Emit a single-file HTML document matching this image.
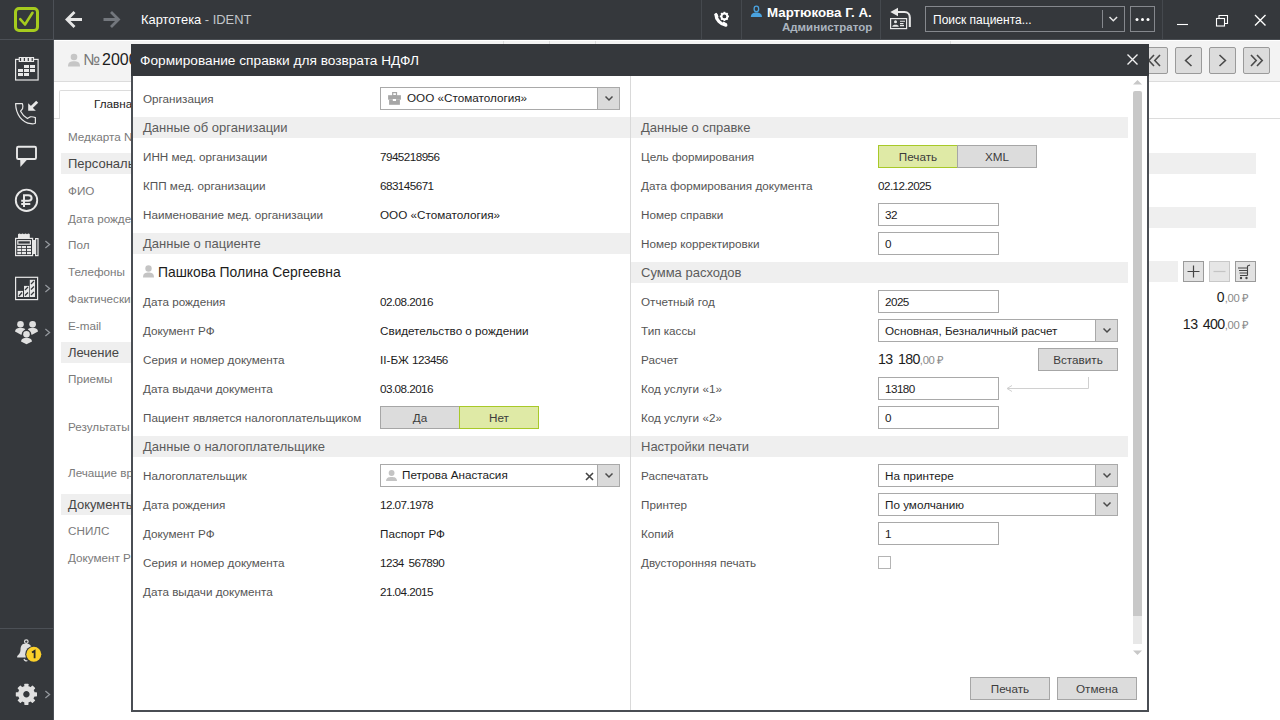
<!DOCTYPE html>
<html><head><meta charset="utf-8">
<style>
*{box-sizing:border-box;margin:0;padding:0}
html,body{width:1280px;height:720px;overflow:hidden;background:#35383c;font-family:"Liberation Sans",sans-serif}
.a{position:absolute}
.t{position:absolute;white-space:nowrap;font-size:11.7px;line-height:14px}
.lb{color:#555555}
.v{color:#1c1c1c}
.num{letter-spacing:-0.55px;word-spacing:2px}
.band{position:absolute;background:#efefef;height:21px}
.band span{position:absolute;left:10px;top:4px;font-size:13px;line-height:14px;color:#5c5c5c;white-space:nowrap}
.inp{position:absolute;border:1px solid #a9a9a9;background:#fff;height:23px}
.inp span{position:absolute;left:6px;top:4px;font-size:11.7px;line-height:14px;color:#1c1c1c;white-space:nowrap}
.dd{position:absolute;right:0;top:0;bottom:0;width:22px;background:#dadada;border-left:1px solid #a9a9a9}
.dd svg{position:absolute;left:6px;top:7px}
.btn{position:absolute;background:#dcdcdc;border:1px solid #a6a6a6;text-align:center;font-size:11.7px;line-height:21px;color:#3c3c3c;white-space:nowrap}
.tg-on{background:#dfeaa6;border:1px solid #a8c929}
.sbl{position:absolute;left:68px;font-size:11.7px;line-height:14px;color:#7a7a7a;white-space:nowrap}
.sep{position:absolute;top:0;width:1px;height:39px;background:#45494e}
</style></head><body>
<div class="a" style="left:54px;top:40px;width:1226px;height:680px;background:#fff"></div>
<div class="a" style="left:54px;top:41px;width:1226px;height:40px;background:#f3f3f3"></div>
<div class="a" style="left:54px;top:81px;width:1226px;height:1px;background:#dcdcdc"></div>
<div class="a" style="left:503px;top:41px;width:1px;height:40px;background:#dcdcdc"></div>
<div class="a" style="left:549px;top:41px;width:1px;height:40px;background:#dcdcdc"></div>
<div class="a" style="left:595px;top:41px;width:1px;height:40px;background:#dcdcdc"></div>
<div class="a" style="left:950px;top:41px;width:1px;height:40px;background:#dcdcdc"></div>
<svg class="a" style="left:68px;top:53px" width="12" height="14" viewBox="0 0 12 14"><circle cx="6" cy="4" r="3.3" fill="#c6c6c6"/><path d="M0 13.5 C0 9 2.5 8.3 6 8.3 S12 9 12 13.5Z" fill="#c6c6c6"/></svg>
<div class="t" style="left:83px;top:51px;font-size:16px;line-height:18px;color:#777">№</div>
<div class="t" style="left:102px;top:51px;font-size:16px;line-height:18px;color:#1c1c1c">2000</div>
<div class="a" style="left:1141px;top:47px;width:27px;height:27px;background:#dcdcdc;border:1px solid #9a9a9a;border-radius:2px"></div>
<div class="a" style="left:1175px;top:47px;width:27px;height:27px;background:#dcdcdc;border:1px solid #9a9a9a;border-radius:2px"></div>
<div class="a" style="left:1209px;top:47px;width:27px;height:27px;background:#dcdcdc;border:1px solid #9a9a9a;border-radius:2px"></div>
<div class="a" style="left:1243px;top:47px;width:27px;height:27px;background:#dcdcdc;border:1px solid #9a9a9a;border-radius:2px"></div>
<svg class="a" style="left:1141px;top:47px" width="136" height="27" viewBox="0 0 136 27">
 <path d="M13 8 L7.8 13.5 L13 19 M19 8 L13.8 13.5 L19 19" fill="none" stroke="#4a4a4a" stroke-width="1.6"/>
 <path d="M50.5 8 L44.6 13.5 L50.5 19" fill="none" stroke="#4a4a4a" stroke-width="1.6"/>
 <path d="M78.5 8 L84.4 13.5 L78.5 19" fill="none" stroke="#4a4a4a" stroke-width="1.6"/>
 <path d="M110 8 L115.2 13.5 L110 19 M116 8 L121.2 13.5 L116 19" fill="none" stroke="#4a4a4a" stroke-width="1.6"/>
</svg>
<div class="a" style="left:54px;top:118px;width:1226px;height:1px;background:#dcdcdc"></div>
<div class="a" style="left:59px;top:90px;width:120px;height:29px;background:#fff;border:1px solid #dcdcdc;border-bottom:none;border-radius:2px 2px 0 0"></div>
<div class="t" style="left:94px;top:97px;color:#1c1c1c">Главная</div>
<div class="sbl" style="top:130px">Медкарта N</div>
<div class="a" style="left:61px;top:153px;width:560px;height:21px;background:#efefef"></div>
<div class="t" style="left:68px;top:157px;font-size:13px;line-height:14px;color:#464646">Персональные данные</div>
<div class="a" style="left:61px;top:342px;width:560px;height:21px;background:#efefef"></div>
<div class="t" style="left:68px;top:346px;font-size:13px;line-height:14px;color:#464646">Лечение</div>
<div class="a" style="left:61px;top:494px;width:560px;height:21px;background:#efefef"></div>
<div class="t" style="left:68px;top:498px;font-size:13px;line-height:14px;color:#464646">Документы</div>
<div class="sbl" style="top:184px">ФИО</div>
<div class="sbl" style="top:212px">Дата рождения</div>
<div class="sbl" style="top:238px">Пол</div>
<div class="sbl" style="top:265px">Телефоны</div>
<div class="sbl" style="top:292px">Фактический адрес</div>
<div class="sbl" style="top:319px">E-mail</div>
<div class="sbl" style="top:372px">Приемы</div>
<div class="sbl" style="top:420px">Результаты исследований</div>
<div class="sbl" style="top:466px">Лечащие врачи</div>
<div class="sbl" style="top:524px">СНИЛС</div>
<div class="sbl" style="top:551px">Документ РФ</div>
<div class="a" style="left:700px;top:153px;width:556px;height:21px;background:#efefef"></div>
<div class="a" style="left:700px;top:207px;width:556px;height:21px;background:#efefef"></div>
<div class="a" style="left:700px;top:261px;width:478px;height:21px;background:#efefef"></div>
<div class="a" style="left:1183px;top:261px;width:21px;height:21px;background:#e2e2e2;border:1px solid #9a9a9a"></div>
<div class="a" style="left:1209px;top:261px;width:21px;height:21px;background:#e6e6e6;border:1px solid #c8c8c8"></div>
<div class="a" style="left:1235px;top:261px;width:21px;height:21px;background:#e2e2e2;border:1px solid #9a9a9a"></div>
<svg class="a" style="left:1183px;top:261px" width="73" height="21" viewBox="0 0 73 21">
 <path d="M10.5 4.5v12M4.5 10.5h12" stroke="#444" stroke-width="1.2"/>
 <path d="M30.5 10.5h12" stroke="#c4c4c4" stroke-width="1.2"/>
 <path d="M55 7h9.5M56 9.5h8.5M56.5 12h8M57 14.5h7.5M64.5 14.5 V5 L67 4" fill="none" stroke="#444" stroke-width="1.1"/>
 <circle cx="58" cy="17" r="1.2" fill="#444"/><circle cx="63.5" cy="17" r="1.2" fill="#444"/>
</svg>
<div class="t" style="left:1200px;top:290px;width:49px;text-align:right;font-size:14px;line-height:15px;color:#1c1c1c">0<span style="font-size:11.3px;color:#8a8a8a;letter-spacing:-0.3px">,00 ₽</span></div>
<div class="t" style="left:1150px;top:317px;width:99px;text-align:right;font-size:14.2px;line-height:15px;color:#1c1c1c;letter-spacing:-0.6px;word-spacing:2px">13 400<span style="font-size:11.3px;color:#8a8a8a;letter-spacing:-0.3px;word-spacing:0">,00 ₽</span></div>
<svg class="a" style="left:0;top:0" width="1280" height="720" viewBox="0 0 1280 720"><rect x="15.5" y="8.5" width="22" height="22" rx="3.5" fill="none" stroke="#a6cb1e" stroke-width="3"/><path d="M20.2 19.2 L25 24.5 L32.5 12.8" fill="none" stroke="#a6cb1e" stroke-width="2.6" stroke-linecap="round" stroke-linejoin="round"/><path d="M82 19.5 H67.5 M74.5 12 L67 19.5 L74.5 27" fill="none" stroke="#e6e6e6" stroke-width="2.8"/><path d="M103.5 19.5 H118 M111 12 L118.5 19.5 L111 27" fill="none" stroke="#73777d" stroke-width="2.8"/><path d="M716 14.8 C716 19.5 720.5 24.5 725.8 25.2" fill="none" stroke="#fff" stroke-width="3.3" stroke-linecap="round"/><path d="M714.2 14.2 L716.5 12.8 L718.6 16.5 L716.8 17.8Z M722.2 23.6 L723.6 21.6 L727.2 23.8 L725.8 26.3Z" fill="#fff"/><g transform="translate(724.4 16.4)"><circle r="2.9" fill="none" stroke="#fff" stroke-width="1.9"/><rect x="-0.9" y="-4.6" width="1.8" height="1.8" fill="#fff" transform="rotate(0)"/><rect x="-0.9" y="-4.6" width="1.8" height="1.8" fill="#fff" transform="rotate(45)"/><rect x="-0.9" y="-4.6" width="1.8" height="1.8" fill="#fff" transform="rotate(90)"/><rect x="-0.9" y="-4.6" width="1.8" height="1.8" fill="#fff" transform="rotate(135)"/><rect x="-0.9" y="-4.6" width="1.8" height="1.8" fill="#fff" transform="rotate(180)"/><rect x="-0.9" y="-4.6" width="1.8" height="1.8" fill="#fff" transform="rotate(225)"/><rect x="-0.9" y="-4.6" width="1.8" height="1.8" fill="#fff" transform="rotate(270)"/><rect x="-0.9" y="-4.6" width="1.8" height="1.8" fill="#fff" transform="rotate(315)"/></g><ellipse cx="756.4" cy="8.9" rx="2.3" ry="2.7" fill="none" stroke="#4aa3e0" stroke-width="1.3"/><path d="M750.8 17 C751 13.5 753.5 12.6 756.4 12.6 S761.8 13.5 762 17Z" fill="#4aa3e0"/><path d="M890.3 12 L898 7.8 V16.2Z" fill="#e8e8e8"/><path d="M897 12 H904.5 C908 12 909.8 14.5 909.8 17.5 V27" fill="none" stroke="#e8e8e8" stroke-width="2.1"/><rect x="890.6" y="18.6" width="16" height="10" fill="none" stroke="#e8e8e8" stroke-width="1.2"/><circle cx="895.5" cy="21.8" r="1.5" fill="#e8e8e8"/><path d="M892.2 26.7 C892.5 24.2 898.5 24.2 898.8 26.7Z" fill="#e8e8e8"/><path d="M900 21.3h5M900 23.6h3.5M900 25.6h4" stroke="#e8e8e8" stroke-width="1.1"/><rect x="925.5" y="6.5" width="199" height="25" fill="none" stroke="#85888d" stroke-width="1"/><path d="M1102.5 10 V28" stroke="#85888d" stroke-width="1"/><path d="M1109.5 17 L1113.3 20.8 L1117.1 17" fill="none" stroke="#e6e6e6" stroke-width="1.5"/><rect x="1130.5" y="6.5" width="24" height="25" fill="none" stroke="#85888d" stroke-width="1"/><circle cx="1137" cy="19.5" r="1.5" fill="#fff"/><circle cx="1142.5" cy="19.5" r="1.5" fill="#fff"/><circle cx="1148" cy="19.5" r="1.5" fill="#fff"/><path d="M1177 24.5 H1188" stroke="#fff" stroke-width="1.1"/><rect x="1216.5" y="18.5" width="8" height="7.5" fill="none" stroke="#fff" stroke-width="1.1"/><path d="M1219 18.5 V15.5 H1227.5 V23.5 H1224.5" fill="none" stroke="#fff" stroke-width="1.1"/><path d="M1255 15 L1265.5 25.5 M1265.5 15 L1255 25.5" stroke="#fff" stroke-width="1.4"/><rect x="15.6" y="59.4" width="22.5" height="20.6" fill="none" stroke="#e8e8e8" stroke-width="1.2"/><rect x="18.7" y="57" width="15.4" height="5" fill="#e8e8e8"/><rect x="19.9" y="58" width="1.2" height="3" fill="#35383c"/><rect x="23.799999999999997" y="58" width="1.2" height="3" fill="#35383c"/><rect x="27.7" y="58" width="1.2" height="3" fill="#35383c"/><rect x="31.6" y="58" width="1.2" height="3" fill="#35383c"/><rect x="24" y="65" width="5" height="3" fill="#e8e8e8"/><rect x="30" y="65" width="5" height="3" fill="#e8e8e8"/><rect x="18" y="69" width="5" height="3" fill="#e8e8e8"/><rect x="24" y="69" width="5" height="3" fill="#e8e8e8"/><rect x="30" y="69" width="5" height="3" fill="#e8e8e8"/><rect x="18" y="73" width="5" height="3" fill="#e8e8e8"/><rect x="24" y="73" width="5" height="3" fill="#e8e8e8"/><path d="M15.6 103.6 H22.4 C22.9 105 22.9 107.5 22.6 108.6 L20.6 111.2 C22 114 24.5 116.8 27.4 118.6 L30.4 116.8 C32 116.7 34 117 35.4 117.6 V123.2 C34 123.8 32.5 123.9 31 123.7 C22 122.5 15.8 114.5 15.6 103.6Z" fill="none" stroke="#e8e8e8" stroke-width="1.2" stroke-linejoin="round"/><path d="M28.2 103.2 V110.8 H35.8Z" fill="#e8e8e8"/><path d="M31 107.8 L37.2 101.8" stroke="#e8e8e8" stroke-width="2.8"/><rect x="17" y="146.8" width="19" height="12.2" rx="1.3" fill="none" stroke="#e8e8e8" stroke-width="1.9"/><path d="M20.2 159.5 H27.2 L20.4 167Z" fill="#e8e8e8"/><circle cx="26.5" cy="200.3" r="10.7" fill="none" stroke="#e8e8e8" stroke-width="1.9"/><path d="M24 207 V195.2 H28.3 C30.6 195.2 31.6 196.5 31.6 198 S30.6 200.8 28.3 200.8 H21.2 M21.2 203.9 H30.3" fill="none" stroke="#e8e8e8" stroke-width="2"/><path d="M18 238.5 V234.2 Q19.5 232.6 21 234.2 Q22.5 232.6 24 234.2 Q25.5 232.6 27 234.2 Q28.5 232.6 29.8 234.2 V238.5Z" fill="#e8e8e8"/><rect x="15.6" y="238.4" width="17" height="17.2" fill="none" stroke="#e8e8e8" stroke-width="1.2"/><rect x="17.8" y="240.7" width="12.6" height="3.5" fill="none" stroke="#e8e8e8" stroke-width="1.2"/><rect x="17.3" y="246" width="4" height="2.2" fill="#e8e8e8"/><rect x="22" y="246" width="4" height="2.2" fill="#e8e8e8"/><rect x="27" y="246" width="4" height="2.2" fill="#e8e8e8"/><rect x="17.3" y="249" width="4" height="2.2" fill="#e8e8e8"/><rect x="22" y="249" width="4" height="2.2" fill="#e8e8e8"/><rect x="27" y="249" width="4" height="2.2" fill="#e8e8e8"/><rect x="17.3" y="252" width="4" height="2.2" fill="#e8e8e8"/><rect x="22" y="252" width="4" height="2.2" fill="#e8e8e8"/><rect x="27" y="252" width="4" height="2.2" fill="#e8e8e8"/><rect x="33" y="240" width="2" height="14" fill="#e8e8e8"/><rect x="35.6" y="238.6" width="2.4" height="17" fill="none" stroke="#e8e8e8" stroke-width="1.2"/><rect x="15.6" y="277.3" width="22" height="22.3" fill="none" stroke="#e8e8e8" stroke-width="1.2"/><rect x="17.8" y="290.9" width="5.2" height="6.1" fill="#e8e8e8"/><rect x="24" y="285.9" width="5.1" height="11.1" fill="#e8e8e8"/><rect x="29.8" y="279.8" width="5.2" height="17.2" fill="#e8e8e8"/><path d="M19 296 L22 292.5 M25 290 L28 287 M25 295.5 L28 292.5 M31 284 L34 281 M31 289.5 L34 286.5 M31 295 L34 292" stroke="#35383c" stroke-width="1.3"/><circle cx="20.5" cy="324.2" r="3.3" fill="#e0e0e0"/><path d="M15 331.5 C15.5 328.5 18 327.8 20.5 327.8 S24.8 328.5 25.3 329.5 L21.5 335 Z" fill="#e0e0e0"/><circle cx="32.6" cy="324.2" r="3.3" fill="#e0e0e0"/><path d="M38 331.5 C37.5 328.5 35 327.8 32.6 327.8 S28.3 328.5 27.8 329.5 L31.5 335 Z" fill="#e0e0e0"/><circle cx="26.5" cy="334.3" r="4.8" fill="#35383c"/><circle cx="26.5" cy="334.3" r="3.3" fill="#e0e0e0"/><path d="M21 341.5 C21.5 338.5 24 337.8 26.5 337.8 S31.5 338.5 32 341.5 L26.5 344.2 Z" fill="#e0e0e0"/><path d="M45.4 241.1 L49.6 244.6 L45.4 248.1" fill="none" stroke="#94989d" stroke-width="1.25"/><path d="M45.4 285.1 L49.6 288.6 L45.4 292.1" fill="none" stroke="#94989d" stroke-width="1.25"/><path d="M45.4 329.1 L49.6 332.6 L45.4 336.1" fill="none" stroke="#94989d" stroke-width="1.25"/><path d="M45.4 691.0 L49.6 694.5 L45.4 698.0" fill="none" stroke="#94989d" stroke-width="1.25"/><path d="M0 628.5 H53" stroke="#4c5056" stroke-width="1"/><circle cx="26.3" cy="641.6" r="1.8" fill="none" stroke="#e0e0e0" stroke-width="1.2"/><path d="M26 643.5 C21 643.5 20.5 647 20.5 650 C20.5 653 18.5 655 17.2 656 V657.6 H33 V652 C32 648 31.5 643.5 26 643.5Z" fill="#e0e0e0"/><path d="M24 659 C24.5 660.5 26 661.3 27.5 660.5" stroke="#e0e0e0" stroke-width="1.3" fill="none"/><circle cx="33.8" cy="654.3" r="8.6" fill="#35383c"/><circle cx="33.8" cy="654.3" r="7.5" fill="#fbd02a"/><path d="M32 652.5 L34.6 650.9 V658.2" fill="none" stroke="#2a2a2a" stroke-width="1.8"/><g transform="translate(26.4 694.3)"><rect x="-2.1" y="-10.6" width="4.2" height="4" rx="0.6" fill="#e0e0e0" transform="rotate(0)"/><rect x="-2.1" y="-10.6" width="4.2" height="4" rx="0.6" fill="#e0e0e0" transform="rotate(45)"/><rect x="-2.1" y="-10.6" width="4.2" height="4" rx="0.6" fill="#e0e0e0" transform="rotate(90)"/><rect x="-2.1" y="-10.6" width="4.2" height="4" rx="0.6" fill="#e0e0e0" transform="rotate(135)"/><rect x="-2.1" y="-10.6" width="4.2" height="4" rx="0.6" fill="#e0e0e0" transform="rotate(180)"/><rect x="-2.1" y="-10.6" width="4.2" height="4" rx="0.6" fill="#e0e0e0" transform="rotate(225)"/><rect x="-2.1" y="-10.6" width="4.2" height="4" rx="0.6" fill="#e0e0e0" transform="rotate(270)"/><rect x="-2.1" y="-10.6" width="4.2" height="4" rx="0.6" fill="#e0e0e0" transform="rotate(315)"/><circle r="5.8" fill="none" stroke="#e0e0e0" stroke-width="5.2"/></g></svg>
<div class="a" style="left:0;top:39px;width:53px;height:1px;background:#4c5056"></div>
<div class="a" style="left:53px;top:0;width:1px;height:720px;background:#4c5056"></div>
<div class="a" style="left:54px;top:39px;width:1226px;height:1px;background:#4a4e53"></div>
<div class="sep" style="left:701px"></div><div class="sep" style="left:741px"></div><div class="sep" style="left:880px"></div><div class="sep" style="left:1162px"></div>
<div class="t" style="left:141px;top:13px;font-size:12.9px;line-height:14px;color:#fff">Картотека <span style="color:#c3c6ca">- IDENT</span></div>
<div class="t" style="left:767px;top:5px;font-size:13.3px;line-height:16px;color:#fff;font-weight:bold">Мартюкова Г. А.</div>
<div class="t" style="left:782px;top:20px;font-size:11.5px;line-height:14px;color:#aab4bf;font-weight:bold">Администратор</div>
<div class="t" style="left:933px;top:13px;font-size:12px;line-height:14px;color:#fff">Поиск пациента...</div>
<div class="a" style="left:131px;top:44px;width:1018px;height:668px;background:#fff;border:2px solid #4a4e54;border-top:none"></div>
<div class="a" style="left:131px;top:44px;width:1018px;height:32px;background:#35383c"></div>
<div class="t" style="left:140px;top:54px;font-size:13.7px;line-height:14px;color:#fff">Формирование справки для возврата НДФЛ</div>
<svg class="a" style="left:1126px;top:53px" width="13" height="13" viewBox="0 0 13 13"><path d="M1.5 1.5 L11.5 11.5 M11.5 1.5 L1.5 11.5" stroke="#f2f2f2" stroke-width="1.35"/></svg>
<div class="a" style="left:630px;top:76px;width:1px;height:634px;background:#d9d9d9"></div>
<div class="t lb" style="left:143px;top:92px">Организация</div>
<div class="inp" style="left:380px;top:87px;width:240px"><svg class="a" style="left:7px;top:4px" width="14" height="14" viewBox="0 0 14 14"><rect x="4.7" y="0.6" width="3.8" height="3" fill="none" stroke="#a6a6a6" stroke-width="1.2"/><rect x="0.1" y="3.2" width="12.8" height="4.5" fill="#a6a6a6"/><rect x="1.1" y="7.7" width="10.8" height="5.1" fill="#a6a6a6"/><rect x="4.8" y="7" width="3.2" height="2" fill="#fff"/></svg><span style="left:26px;top:3px">ООО «Стоматология»</span><div class="dd"><svg width="10" height="7" viewBox="0 0 10 7"><path d="M1.5 1.5 L5 5 L8.5 1.5" fill="none" stroke="#4a4a4a" stroke-width="1.5"/></svg></div></div>
<div class="band" style="left:133px;top:117px;width:497px"><span>Данные об организации</span></div>
<div class="t lb" style="left:143px;top:150px">ИНН мед. организации</div>
<div class="t v num" style="left:380px;top:150px">7945218956</div>
<div class="t lb" style="left:143px;top:179px">КПП мед. организации</div>
<div class="t v num" style="left:380px;top:179px">683145671</div>
<div class="t lb" style="left:143px;top:208px">Наименование мед. организации</div>
<div class="t v " style="left:380px;top:208px">ООО «Стоматология»</div>
<div class="band" style="left:133px;top:233px;width:497px"><span>Данные о пациенте</span></div>
<svg class="a" style="left:143px;top:265px" width="11" height="13" viewBox="0 0 11 13"><circle cx="5.5" cy="3.5" r="3.2" fill="#c4c4c4"/><path d="M0 12.5 C0 8.5 2.3 7.6 5.5 7.6 S11 8.5 11 12.5Z" fill="#c4c4c4"/></svg>
<div class="t v" style="left:158px;top:264px;font-size:13.9px;line-height:16px">Пашкова Полина Сергеевна</div>
<div class="t lb" style="left:143px;top:295px">Дата рождения</div>
<div class="t v num" style="left:380px;top:295px">02.08.2016</div>
<div class="t lb" style="left:143px;top:324px">Документ РФ</div>
<div class="t v " style="left:380px;top:324px">Свидетельство о рождении</div>
<div class="t lb" style="left:143px;top:353px">Серия и номер документа</div>
<div class="t v " style="left:380px;top:353px">II-БЖ <span class="num">123456</span></div>
<div class="t lb" style="left:143px;top:382px">Дата выдачи документа</div>
<div class="t v num" style="left:380px;top:382px">03.08.2016</div>
<div class="t lb" style="left:143px;top:411px">Пациент является налогоплательщиком</div>
<div class="btn" style="left:380px;top:406px;width:80px;height:23px">Да</div>
<div class="btn tg-on" style="left:459px;top:406px;width:80px;height:23px">Нет</div>
<div class="band" style="left:133px;top:436px;width:497px"><span>Данные о налогоплательщике</span></div>
<div class="t lb" style="left:143px;top:469px">Налогоплательщик</div>
<div class="inp" style="left:380px;top:464px;width:240px"><svg class="a" style="left:5px;top:5px" width="11" height="12" viewBox="0 0 11 12"><circle cx="5.6" cy="3" r="2.9" fill="#c4c4c4"/><path d="M0 11 C0.3 7.5 2.5 7 5.6 7 S10.8 7.5 11 11Z" fill="#c4c4c4"/></svg><span style="left:21px;top:3px">Петрова Анастасия</span><svg class="a" style="left:204px;top:7px" width="9" height="9" viewBox="0 0 9 9"><path d="M1 1 L8 8 M8 1 L1 8" stroke="#444" stroke-width="1.6"/></svg><div class="dd"><svg width="10" height="7" viewBox="0 0 10 7"><path d="M1.5 1.5 L5 5 L8.5 1.5" fill="none" stroke="#4a4a4a" stroke-width="1.5"/></svg></div></div>
<div class="t lb" style="left:143px;top:498px">Дата рождения</div>
<div class="t v num" style="left:380px;top:498px">12.07.1978</div>
<div class="t lb" style="left:143px;top:527px">Документ РФ</div>
<div class="t v " style="left:380px;top:527px">Паспорт РФ</div>
<div class="t lb" style="left:143px;top:556px">Серия и номер документа</div>
<div class="t v num" style="left:380px;top:556px">1234 567890</div>
<div class="t lb" style="left:143px;top:585px">Дата выдачи документа</div>
<div class="t v num" style="left:380px;top:585px">21.04.2015</div>
<div class="band" style="left:631px;top:117px;width:497px"><span>Данные о справке</span></div>
<div class="t lb" style="left:641px;top:150px">Цель формирования</div>
<div class="btn tg-on" style="left:878px;top:145px;width:80px;height:23px">Печать</div>
<div class="btn" style="left:957px;top:145px;width:80px;height:23px">XML</div>
<div class="t lb" style="left:641px;top:179px">Дата формирования документа</div>
<div class="t v num" style="left:878px;top:179px">02.12.2025</div>
<div class="t lb" style="left:641px;top:208px">Номер справки</div>
<div class="inp" style="left:878px;top:203px;width:121px"><span class="num">32</span></div>
<div class="t lb" style="left:641px;top:237px">Номер корректировки</div>
<div class="inp" style="left:878px;top:232px;width:121px"><span class="num">0</span></div>
<div class="band" style="left:631px;top:262px;width:497px"><span>Сумма расходов</span></div>
<div class="t lb" style="left:641px;top:295px">Отчетный год</div>
<div class="inp" style="left:878px;top:290px;width:121px"><span class="num">2025</span></div>
<div class="t lb" style="left:641px;top:324px">Тип кассы</div>
<div class="inp" style="left:878px;top:319px;width:240px"><span class="">Основная, Безналичный расчет</span><div class="dd"><svg width="10" height="7" viewBox="0 0 10 7"><path d="M1.5 1.5 L5 5 L8.5 1.5" fill="none" stroke="#4a4a4a" stroke-width="1.5"/></svg></div></div>
<div class="t lb" style="left:641px;top:353px">Расчет</div>
<div class="t v" style="left:878px;top:351px;font-size:14.2px;line-height:16px;letter-spacing:-0.6px;word-spacing:2px">13 180<span style="font-size:11.3px;color:#8a8a8a;letter-spacing:-0.3px;word-spacing:0">,00 ₽</span></div>
<div class="btn" style="left:1038px;top:348px;width:80px;height:23px">Вставить</div>
<div class="t lb" style="left:641px;top:382px">Код услуги «1»</div>
<div class="inp" style="left:878px;top:377px;width:121px"><span class="num">13180</span></div>
<svg class="a" style="left:1004px;top:376px" width="88" height="16" viewBox="0 0 88 16"><path d="M84.5 1 V12.5 H3" fill="none" stroke="#d0d0d0" stroke-width="1"/><path d="M8 9.5 L3 12.5 L8 15.5" fill="none" stroke="#d0d0d0" stroke-width="1"/></svg>
<div class="t lb" style="left:641px;top:411px">Код услуги «2»</div>
<div class="inp" style="left:878px;top:406px;width:121px"><span class="num">0</span></div>
<div class="band" style="left:631px;top:436px;width:497px"><span>Настройки печати</span></div>
<div class="t lb" style="left:641px;top:469px">Распечатать</div>
<div class="inp" style="left:878px;top:464px;width:240px"><span class="">На принтере</span><div class="dd"><svg width="10" height="7" viewBox="0 0 10 7"><path d="M1.5 1.5 L5 5 L8.5 1.5" fill="none" stroke="#4a4a4a" stroke-width="1.5"/></svg></div></div>
<div class="t lb" style="left:641px;top:498px">Принтер</div>
<div class="inp" style="left:878px;top:493px;width:240px"><span class="">По умолчанию</span><div class="dd"><svg width="10" height="7" viewBox="0 0 10 7"><path d="M1.5 1.5 L5 5 L8.5 1.5" fill="none" stroke="#4a4a4a" stroke-width="1.5"/></svg></div></div>
<div class="t lb" style="left:641px;top:527px">Копий</div>
<div class="inp" style="left:878px;top:522px;width:121px"><span class="num">1</span></div>
<div class="t lb" style="left:641px;top:556px">Двусторонняя печать</div>
<div class="a" style="left:878px;top:556px;width:13px;height:13px;border:1px solid #b4b4b4;background:#fff"></div>
<svg class="a" style="left:1133px;top:79px" width="9" height="6"><path d="M0 5.5 L4.5 1 L9 5.5Z" fill="#c8c8c8"/></svg>
<div class="a" style="left:1133px;top:91px;width:9px;height:525px;background:#c8c8c8;border-radius:2px 2px 0 0"></div>
<div class="a" style="left:1133px;top:616px;width:9px;height:28px;background:#e8e8e8"></div>
<svg class="a" style="left:1133px;top:650px" width="9" height="6"><path d="M0 0.5 L4.5 5 L9 0.5Z" fill="#c8c8c8"/></svg>
<div class="btn" style="left:970px;top:677px;width:80px;height:23px">Печать</div>
<div class="btn" style="left:1057px;top:677px;width:80px;height:23px">Отмена</div>
</body></html>
